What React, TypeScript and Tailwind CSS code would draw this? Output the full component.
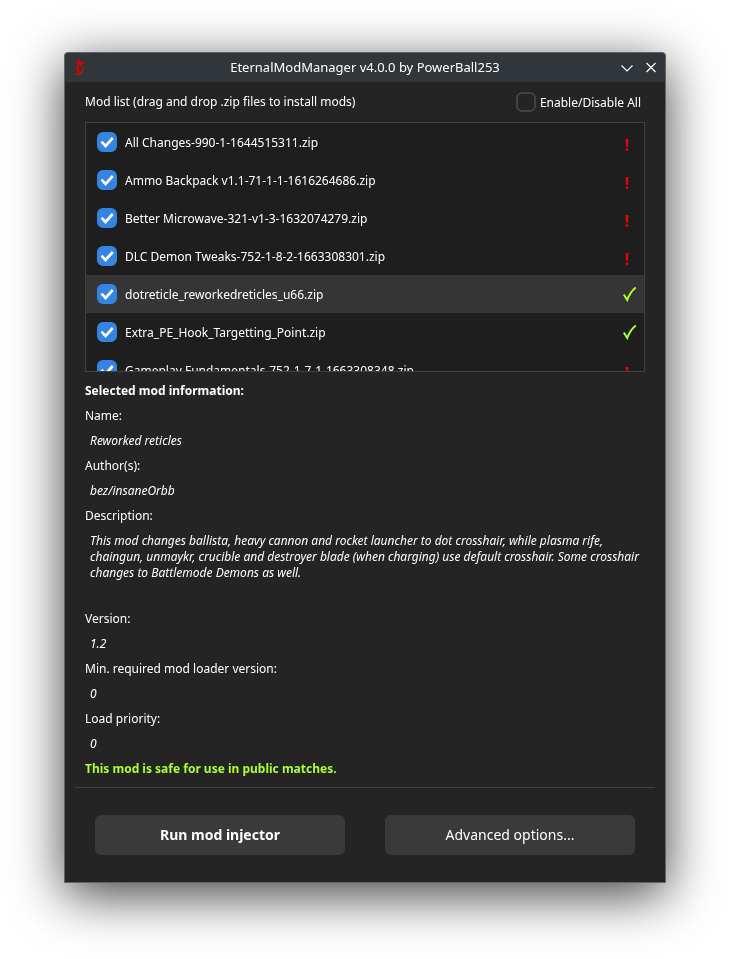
import { useState } from "react";

interface Mod {
  file: string;
  safe: boolean;
}

const MODS: Mod[] = [
  { file: "All Changes-990-1-1644515311.zip", safe: false },
  { file: "Ammo Backpack v1.1-71-1-1-1616264686.zip", safe: false },
  { file: "Better Microwave-321-v1-3-1632074279.zip", safe: false },
  { file: "DLC Demon Tweaks-752-1-8-2-1663308301.zip", safe: false },
  { file: "dotreticle_reworkedreticles_u66.zip", safe: true },
  { file: "Extra_PE_Hook_Targetting_Point.zip", safe: true },
  { file: "Gameplay Fundamentals-752-1-7-1-1663308348.zip", safe: false },
];

function SlayerMark() {
  return (
    <svg viewBox="2 1 16 20" className="h-5 w-4" fill="none" stroke="#e60000" aria-hidden="true">
      <path d="M7.5 2v14" strokeWidth="1.6" />
      <path d="M5 6.300l8.500-.8M10.300 5.500v4" strokeWidth="1.4" />
      <path d="M5 10.500l2.500 4M12 10.500c0 3-1 5-3 6l-4 1" strokeWidth="1.4" />
      <path d="M2.500 3h1M12.500 3h1M3 16.500h1M12.500 15h1M8 18.500h1M2.500 8h1" strokeWidth="1" opacity="0.5" />
    </svg>
  );
}

function Checkbox({ id, label, checked, onChange }: {
  id: string;
  label: string;
  checked: boolean;
  onChange: () => void;
}) {
  return (
    <span className="relative block size-5 shrink-0">
      <input
        id={id}
        type="checkbox"
        aria-label={label}
        checked={checked}
        onChange={onChange}
        className="peer block size-5 appearance-none rounded-md border-2 border-[#424242] checked:border-[#3584e4] checked:bg-[#3584e4]"
      />
      <svg
        viewBox="0 0 20 20"
        className="pointer-events-none absolute inset-0 hidden size-5 peer-checked:block"
        fill="none"
        stroke="#ffffff"
        strokeWidth="2.6"
        aria-hidden="true"
      >
        <path d="M4.500 9.700l4 4.300 7.300-8" />
      </svg>
    </span>
  );
}

function Status({ safe }: { safe: boolean }) {
  if (!safe) {
    return <span className="mt-1.5 w-6 text-center text-base font-bold text-[#f00000]">!</span>;
  }
  return (
    <svg viewBox="0 0 20 20" className="mt-px size-5" fill="none" stroke="#adff2f" aria-hidden="true">
      <path d="M4.800 9.500l3.400 5.500C10 10 13 5.500 16.800 2.500" strokeWidth="2" />
    </svg>
  );
}

function Field({ name, value }: { name: string; value: string }) {
  return (
    <>
      <dt className="leading-[25px]">{name}</dt>
      <dd className="pl-[5px] leading-[25px] italic">{value}</dd>
    </>
  );
}

export default function App() {
  const [enabled, setEnabled] = useState<boolean[]>(MODS.map(() => true));
  const [all, setAll] = useState(false);
  const [selected, setSelected] = useState(4);

  const toggleAll = () => {
    setAll(!all);
    setEnabled(MODS.map(() => !all));
  };

  return (
    <div className="min-h-screen bg-white px-16 pt-[52px] pb-[76px] font-['Noto_Sans',sans-serif] text-xs text-white">
      <main className="rounded-t border border-[#5a6571] bg-[#242424] shadow-[0_12px_52px_rgba(0,0,0,0.75)]">
        <header className="flex h-[29px] items-center rounded-t bg-[#31363b] px-2">
          <div className="w-12">
            <SlayerMark />
          </div>
          <h1 className="flex-1 text-center text-[13px]">EternalModManager v4.0.0 by PowerBall253</h1>
          <div className="flex w-12 justify-end gap-3">
            <button aria-label="Minimize" className="flex size-3 items-center justify-center">
              <svg viewBox="0 0 12 12" className="size-3 shrink-0" fill="none" stroke="#fcfcfc" strokeWidth="1.2">
                <path d="M.5 3.500L6 9l5.500-5.500" />
              </svg>
            </button>
            <button aria-label="Close" className="flex size-3 items-center justify-center">
              <svg viewBox="0 0 12 12" className="size-3 shrink-0" fill="none" stroke="#fcfcfc" strokeWidth="1.2">
                <path d="M1.500 1l9 9M10.500 1l-9 9" />
              </svg>
            </button>
          </div>
        </header>

        <section className="px-5">
          <div className="flex h-10 items-center justify-between pr-1">
            <h2>Mod list (drag and drop .zip files to install mods)</h2>
            <div className="flex items-center gap-1">
              <Checkbox id="all" label="Enable/Disable All" checked={all} onChange={toggleAll} />
              <label htmlFor="all" className="pt-px">Enable/Disable All</label>
            </div>
          </div>

          <ul className="h-[250px] overflow-y-auto border border-[#424242] bg-[#1e1e1e] [scrollbar-width:none]">
            {MODS.map((mod, i) => (
              <li
                key={mod.file}
                onClick={() => setSelected(i)}
                className={
                  i === selected
                    ? "flex h-[38px] items-center bg-[#353535] pr-[5px] pl-[11px]"
                    : "flex h-[38px] items-center pr-[5px] pl-[11px]"
                }
              >
                <Checkbox
                  id={`mod-${i}`}
                  label={mod.file}
                  checked={enabled[i]}
                  onChange={() => setEnabled(enabled.map((on, j) => (j === i ? !on : on)))}
                />
                <label htmlFor={`mod-${i}`} className="pt-0.5 pl-2">{mod.file}</label>
                <span className="flex-1" />
                <Status safe={mod.safe} />
              </li>
            ))}
          </ul>

          <h2 className="mt-1.5 leading-[25px] font-bold">Selected mod information:</h2>
          <dl>
            <Field name="Name:" value="Reworked reticles" />
            <Field name="Author(s):" value="bez/insaneOrbb" />
            <dt className="leading-[25px]">Description:</dt>
            <dd className="min-h-[78px] pt-[5px] pl-[5px] leading-4 italic">
              This mod changes ballista, heavy cannon and rocket launcher to dot crosshair, while plasma rife,
              chaingun, unmaykr, crucible and destroyer blade (when charging) use default crosshair. Some crosshair
              changes to Battlemode Demons as well.
            </dd>
            <Field name="Version:" value="1.2" />
            <Field name="Min. required mod loader version:" value="0" />
            <Field name="Load priority:" value="0" />
          </dl>
          <p className="leading-[25px] font-bold text-[#adff2f]">This mod is safe for use in public matches.</p>
        </section>

        <footer className="mx-2.5 mt-1.5 flex gap-10 border-t border-[#424242] px-5 py-[27px] text-sm">
          <button className="h-10 flex-1 rounded-md bg-[#3a3a3a] font-bold">Run mod injector</button>
          <button className="h-10 flex-1 rounded-md bg-[#3a3a3a]">Advanced options...</button>
        </footer>
      </main>
    </div>
  );
}
